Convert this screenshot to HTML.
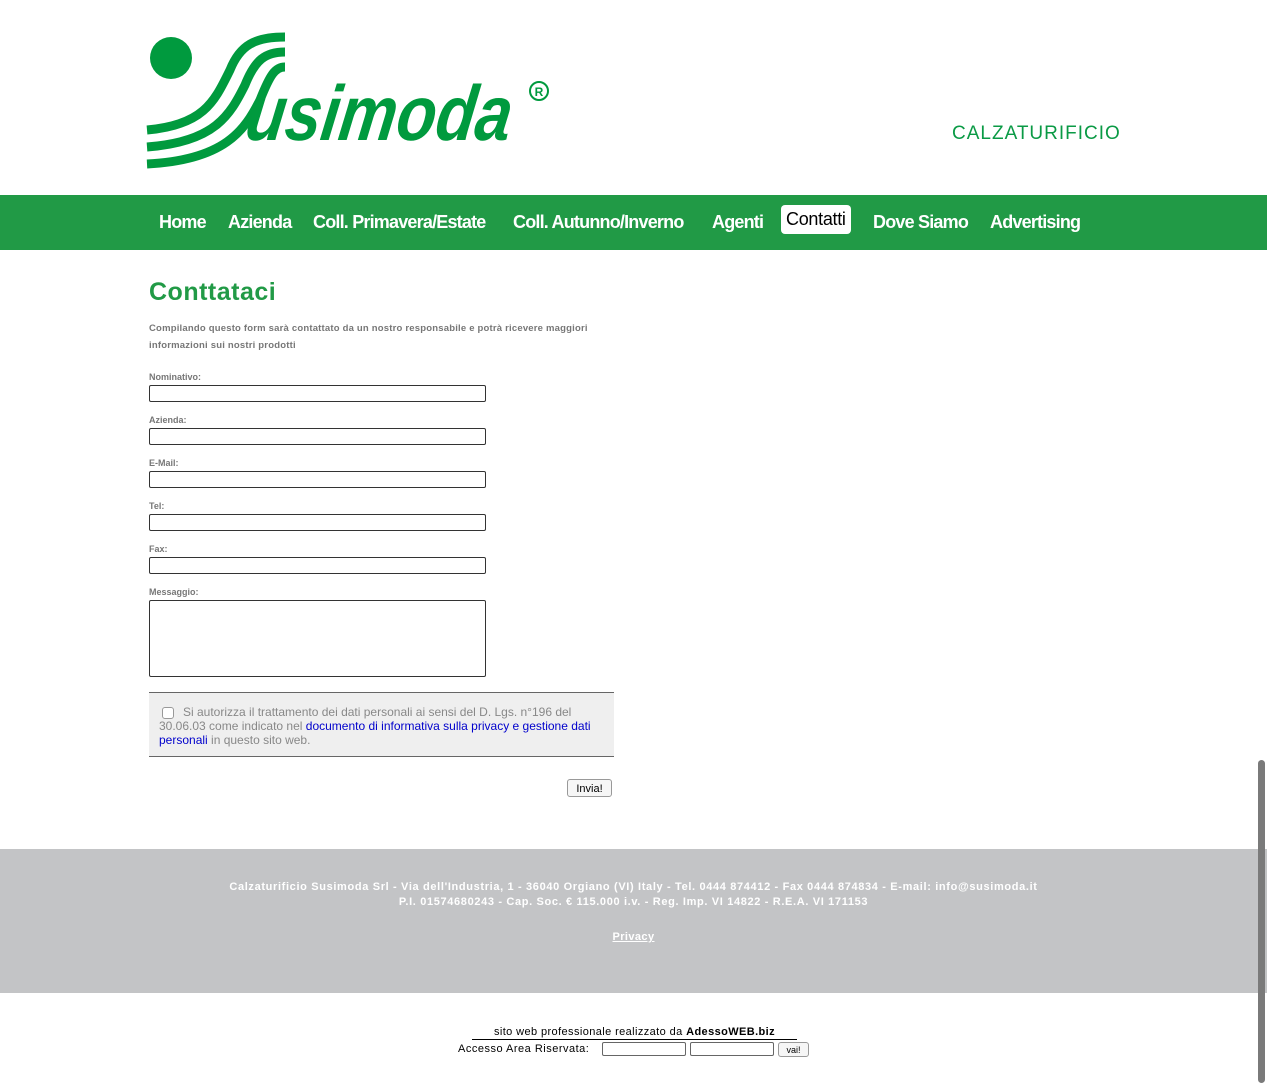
<!DOCTYPE html>
<html><head><meta charset="utf-8"><style>
body{margin:0;width:1267px;height:1087px;background:#fff;font-family:"Liberation Sans",sans-serif;position:relative;overflow:hidden}
.abs{position:absolute}
.nav{left:0;top:195px;width:1267px;height:55px;background:#219a46}
.nav span{position:absolute;top:17px;color:#fff;font-size:18px;font-weight:bold;letter-spacing:-0.8px}
.nav .act{background:#fff;color:#000;border-radius:4px;padding:4px 5px;top:10px;font-weight:normal;letter-spacing:-0.3px}
label{position:absolute;left:149px;font-size:9px;font-weight:bold;color:#777}
.in{position:absolute;left:149px;width:335px;height:15px;border:1px solid #333;border-radius:2px;background:#fff}
</style></head><body>
<svg class="abs" style="left:145px;top:30px" width="410" height="140" viewBox="0 0 410 140">
<circle cx="26" cy="28" r="21" fill="#009a3e"/>
<g fill="none" stroke="#009a3e" stroke-width="9">
<path d="M2 100 C60 95 70 70 85 40 C95 15 110 7 140 7"/>
<path d="M2 117 C70 112 85 85 100 55 C110 30 120 22 140 22"/>
<path d="M2 134 C80 130 100 100 115 70 C125 45 130 37 140 37"/>
</g>
<text x="100" y="110" textLength="265" lengthAdjust="spacingAndGlyphs" font-family="Liberation Sans,sans-serif" font-weight="bold" font-style="italic" font-size="78" fill="#009a3e" transform="skewX(-8) translate(14,0)">usimoda</text>
<circle cx="394" cy="61" r="9" fill="none" stroke="#009a3e" stroke-width="2"/>
<text x="394" y="66" text-anchor="middle" font-family="Liberation Sans,sans-serif" font-weight="bold" font-size="12" fill="#009a3e">R</text>
</svg>
<div class="abs" style="left:952px;top:123px;color:#0a9a45;font-size:19px;letter-spacing:1px">CALZATURIFICIO</div>
<div class="abs nav">
<span style="left:159px">Home</span><span style="left:228px">Azienda</span><span style="left:313px">Coll. Primavera/Estate</span><span style="left:513px">Coll. Autunno/Inverno</span><span style="left:712px">Agenti</span><span class="act" style="left:781px">Contatti</span><span style="left:873px">Dove Siamo</span><span style="left:990px">Advertising</span>
</div>
<div class="abs" style="left:149px;top:278px;color:#219a46;font-size:25px;font-weight:bold;letter-spacing:0.5px">Conttataci</div>
<div class="abs" style="left:149px;top:320px;width:450px;font-size:9.5px;font-weight:bold;color:#777;line-height:17px;letter-spacing:0.2px">Compilando questo form sarà contattato da un nostro responsabile e potrà ricevere maggiori informazioni sui nostri prodotti</div>
<label style="top:372px">Nominativo:</label><div class="in" style="top:385px"></div>
<label style="top:415px">Azienda:</label><div class="in" style="top:428px"></div>
<label style="top:458px">E-Mail:</label><div class="in" style="top:471px"></div>
<label style="top:501px">Tel:</label><div class="in" style="top:514px"></div>
<label style="top:544px">Fax:</label><div class="in" style="top:557px"></div>
<label style="top:587px">Messaggio:</label><div class="in" style="top:600px;height:75px"></div>
<div class="abs" style="left:149px;top:692px;width:465px;height:63px;background:#efefef;border-top:1px solid #666;border-bottom:1px solid #666"></div>
<div class="abs" style="left:162px;top:707px;width:10px;height:10px;border:1px solid #999;border-radius:3px;background:#fff"></div>
<div class="abs" style="left:159px;top:705px;width:440px;font-size:12px;color:#888;line-height:14px;text-indent:24px">Si autorizza il trattamento dei dati personali ai sensi del D. Lgs. n°196 del 30.06.03 come indicato nel <span style="color:#00c">documento di informativa sulla privacy e gestione dati personali</span> in questo sito web.</div>
<div class="abs" style="left:567px;top:779px;width:43px;height:16px;border:1px solid #999;border-radius:3px;background:#f6f6f6;font-size:11px;text-align:center;line-height:19px">Invia!</div>
<div class="abs" style="left:0;top:849px;width:1267px;height:144px;background:#c3c4c6"></div>
<div class="abs" style="left:0;top:880px;width:1267px;text-align:center;color:#fff;font-size:11px;font-weight:bold;line-height:15px;letter-spacing:0.65px">Calzaturificio Susimoda Srl - Via dell'Industria, 1 - 36040 Orgiano (VI) Italy - Tel. 0444 874412 - Fax 0444 874834 - E-mail: info@susimoda.it<br>P.I. 01574680243 - Cap. Soc. € 115.000 i.v. - Reg. Imp. VI 14822 - R.E.A. VI 171153</div>
<div class="abs" style="left:0;top:931px;width:1267px;text-align:center;color:#fff;font-size:11px;font-weight:bold;letter-spacing:0.4px"><u>Privacy</u></div>
<div class="abs" style="left:472px;top:1025px;width:325px;text-align:center;font-size:11px;border-bottom:1px solid #000;line-height:14px;letter-spacing:0.4px">sito web professionale realizzato da <b>AdessoWEB.biz</b></div>
<div class="abs" style="left:458px;top:1043px;font-size:11px;letter-spacing:0.5px">Accesso Area Riservata:</div>
<div class="abs" style="left:602px;top:1042px;width:82px;height:12px;border:1px solid #666;border-radius:2px"></div>
<div class="abs" style="left:690px;top:1042px;width:82px;height:12px;border:1px solid #666;border-radius:2px"></div>
<div class="abs" style="left:778px;top:1042px;width:29px;height:13px;border:1px solid #999;border-radius:3px;background:#f6f6f6;font-size:9px;text-align:center;line-height:14px">vai!</div>
<div class="abs" style="left:1258px;top:760px;width:7px;height:323px;background:#7a7a7a;border-radius:4px"></div>
</body></html>
